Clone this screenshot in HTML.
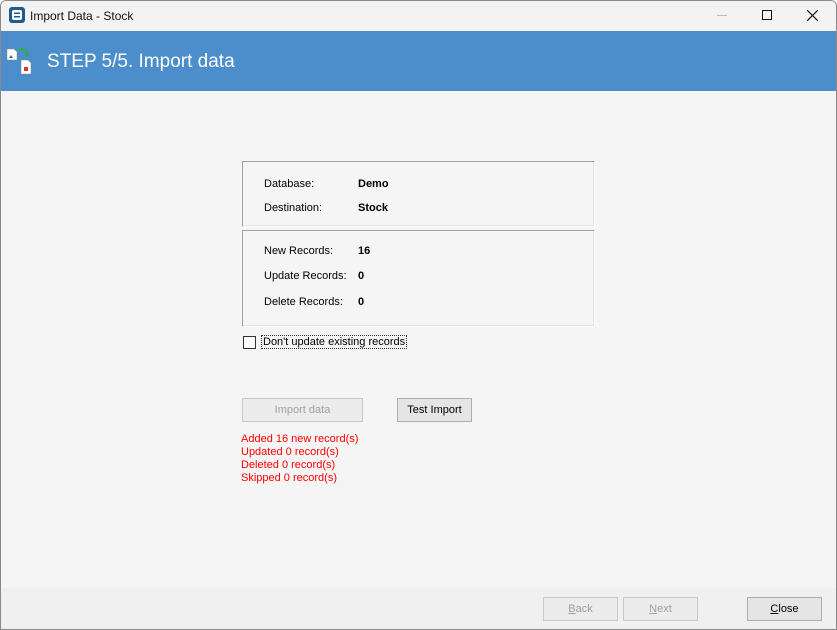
<!DOCTYPE html>
<html><head><style>
*{box-sizing:border-box}
body{margin:0;width:837px;height:630px;background:#fff;font-family:"Liberation Sans",sans-serif;position:relative;overflow:hidden}
.win{position:absolute;left:0;top:0;width:837px;height:630px;border:1px solid #8a8a8a;border-radius:6px 6px 0 0;background:#f5f5f5;overflow:hidden}
.title{position:absolute;left:-1px;top:-1px;width:837px;height:31px;background:#f3f3f3}
.title span{position:absolute;left:30px;top:9px;font-size:12px;color:#111}
.hdr{position:absolute;left:-1px;top:30px;width:837px;height:60px;background:#4c8ecb}
.hdr span{position:absolute;left:47px;top:20px;font-size:19px;color:#fff}
.box{position:absolute;left:241px;width:353px;border-top:1px solid #a0a0a0;border-left:1px solid #a0a0a0;border-right:1px solid #fff;border-bottom:1px solid #fff;box-shadow:inset -1px -1px 0 #e2e2e2}
.t{position:absolute;font-size:11px;color:#000}
.b{font-weight:bold}
.btn{position:absolute;height:24px;border:1px solid #adadad;background:#e5e5e5;font-size:11px;text-align:center;line-height:22px;color:#000}
.dis{background:#ececec;border-color:#c8c8c8;color:#a0a0a0}
.red{position:absolute;left:240px;font-size:11px;color:#f00}
.foot{position:absolute;left:-1px;top:587px;width:837px;height:42px;background:#f0f0f0}
</style></head><body>
<div class="win">
<div class="title">
<svg style="position:absolute;left:9px;top:7px" width="16" height="16"><rect x="0" y="0" width="16" height="16" rx="3" fill="#1d5c8c"/><rect x="3" y="3" width="10" height="10" rx="2" fill="#fff"/><rect x="5" y="5.5" width="6" height="1.5" fill="#1d5c8c"/><rect x="5" y="9" width="6" height="1.5" fill="#1d5c8c"/></svg>
<span>Import Data - Stock</span>
<div style="position:absolute;left:717px;top:15px;width:10px;height:1px;background:#bbb"></div>
<div style="position:absolute;left:762px;top:10px;width:10px;height:10px;border:1px solid #111"></div>
<svg style="position:absolute;left:807px;top:10px" width="11" height="11"><path d="M0 0L11 11M11 0L0 11" stroke="#111" stroke-width="1.2"/></svg>
</div>
<div class="hdr">
<svg style="position:absolute;left:6px;top:15px" width="28" height="30"><path d="M1 3h7l3 3v8H1z" fill="#fff" stroke="#888" stroke-width=".5"/><path d="M3 12l2-3 2 3z" fill="#2b6fb0"/><path d="M13 4a5 5 0 0 1 8 4" stroke="#2eaa5a" stroke-width="2.5" fill="none"/><path d="M18 8h6l-3 3z" fill="#2eaa5a"/><path d="M15 14h7l3 3v11H15z" fill="#fff" stroke="#888" stroke-width=".5"/><rect x="18" y="21" width="4" height="4" fill="#d33"/></svg>
<span>STEP 5/5. Import data</span>
</div>
<div class="box" style="top:160px;height:66px"></div>
<div class="box" style="top:229px;height:97px"></div>
<div class="t" style="left:263px;top:177px">Database:</div><div class="t b" style="left:357px;top:177px">Demo</div>
<div class="t" style="left:263px;top:201px">Destination:</div><div class="t b" style="left:357px;top:201px">Stock</div>
<div class="t" style="left:263px;top:244px">New Records:</div><div class="t b" style="left:357px;top:244px">16</div>
<div class="t" style="left:263px;top:269px">Update Records:</div><div class="t b" style="left:357px;top:269px">0</div>
<div class="t" style="left:263px;top:295px">Delete Records:</div><div class="t b" style="left:357px;top:295px">0</div>
<div style="position:absolute;left:242px;top:335px;width:13px;height:13px;border:1px solid #333;background:#fff"></div>
<div class="t" style="left:260px;top:334px;border:1px dotted #333;padding:0 1px">Don't update existing records</div>
<div class="btn dis" style="left:241px;top:397px;width:121px">Import data</div>
<div class="btn" style="left:396px;top:397px;width:75px">Test Import</div>
<div class="red" style="top:432px">Added 16 new record(s)</div>
<div class="red" style="top:445px">Updated 0 record(s)</div>
<div class="red" style="top:458px">Deleted 0 record(s)</div>
<div class="red" style="top:471px">Skipped 0 record(s)</div>
<div class="foot">
<div class="btn dis" style="left:543px;top:9px;width:75px"><u>B</u>ack</div>
<div class="btn dis" style="left:623px;top:9px;width:75px"><u>N</u>ext</div>
<div class="btn" style="left:747px;top:9px;width:75px"><u>C</u>lose</div>
</div>
</div>
</body></html>
